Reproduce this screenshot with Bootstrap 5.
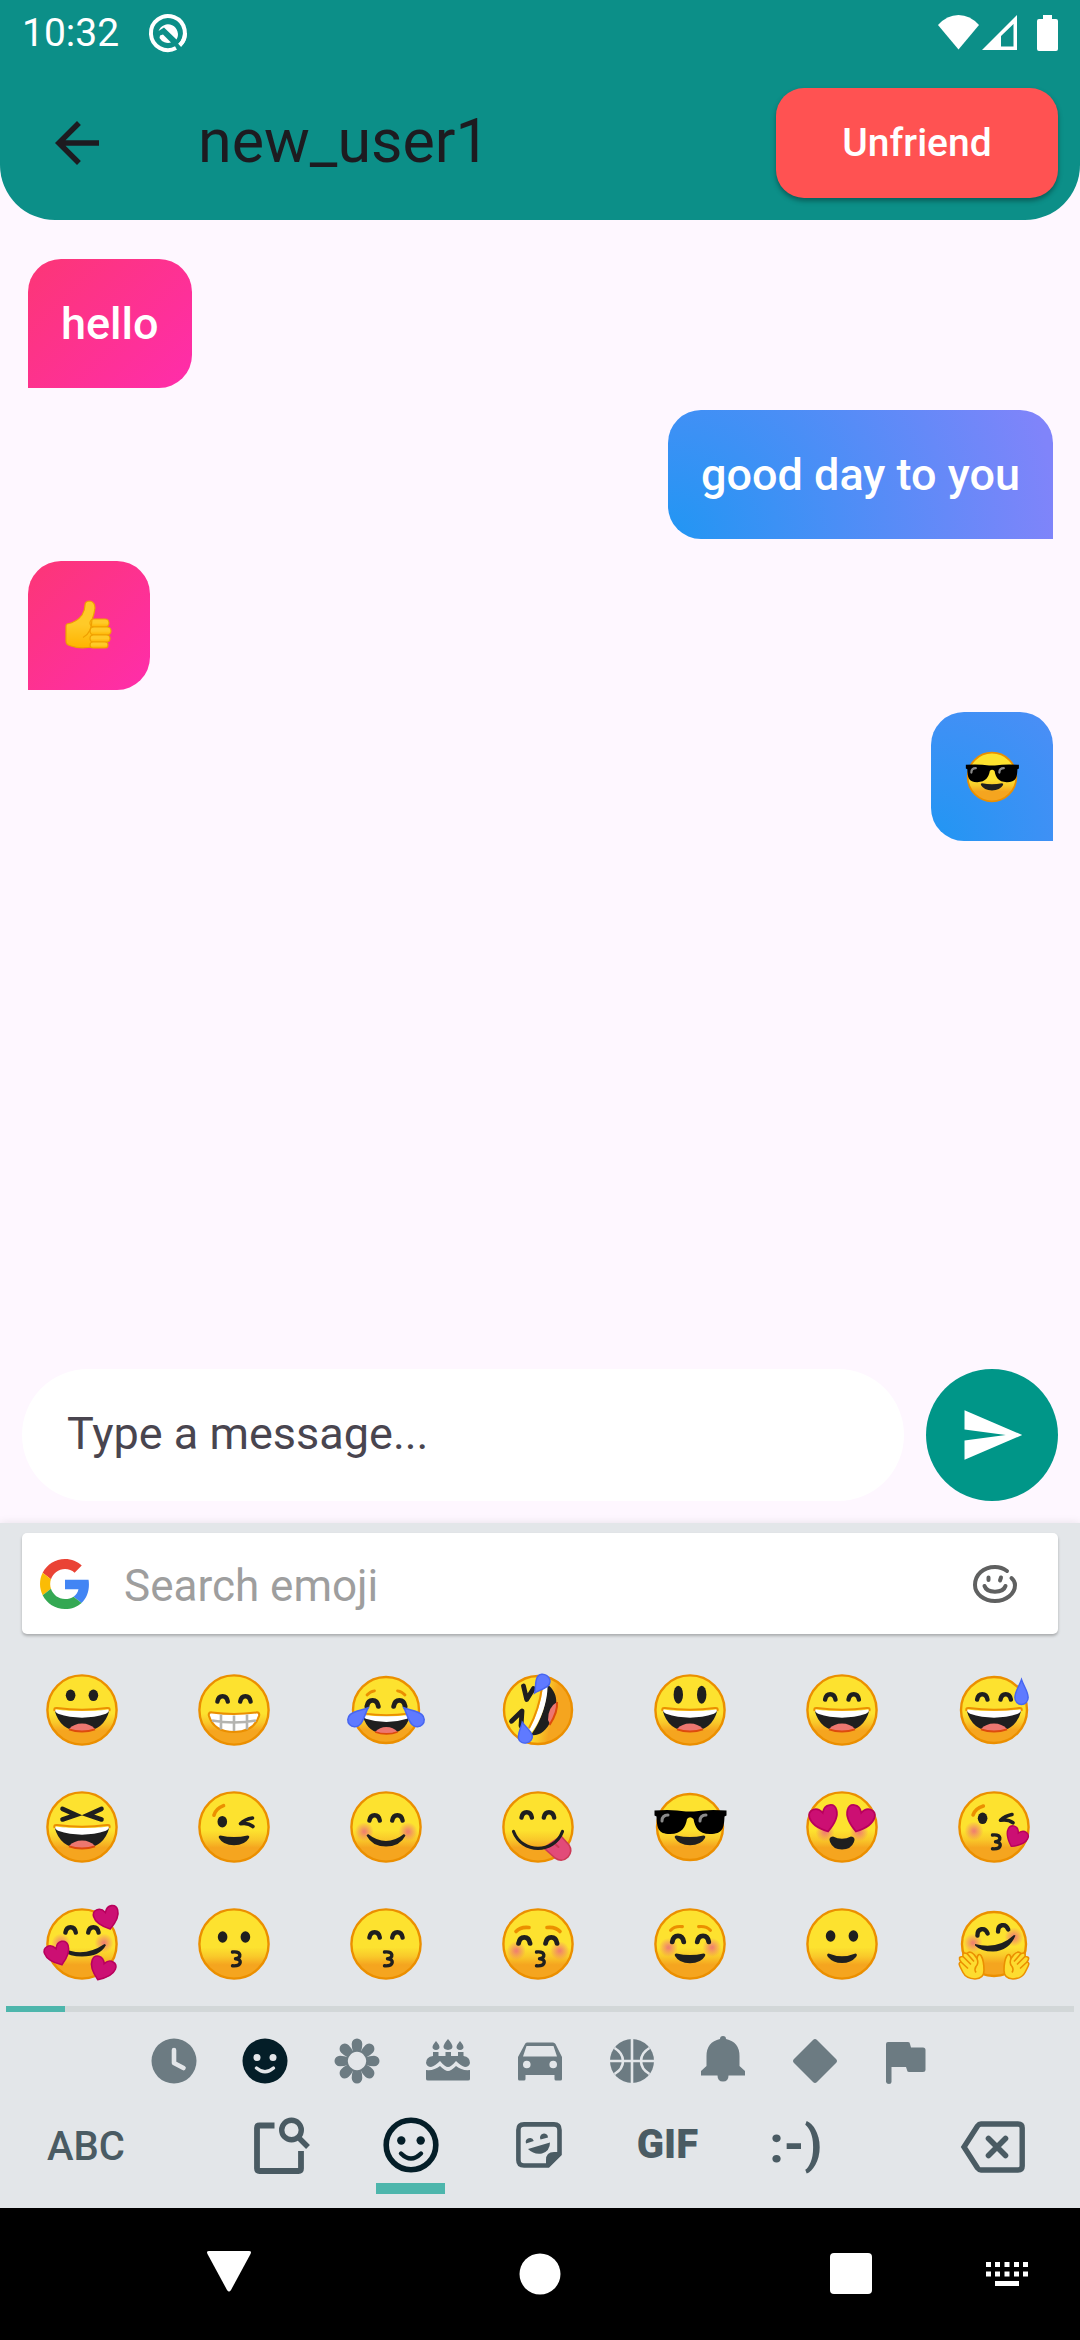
<!DOCTYPE html>
<html lang="en">
<head>
<meta charset="utf-8">
<meta name="viewport" content="width=device-width, initial-scale=1">
<title>Chat with new_user1</title>
<link href="https://cdn.jsdelivr.net/npm/bootstrap@5.3.0/dist/css/bootstrap.min.css" rel="stylesheet">
<style>
  body { font-family: Roboto, "Liberation Sans", sans-serif; background: #fef7ff; color: #1d1b20; }
  svg { display: block; flex: none; overflow: visible; }
  .btn { --bs-btn-border-width: 0; --bs-btn-padding-x: 0; --bs-btn-padding-y: 0; color: inherit; }

  .app-header { background: #0c8f88; border-radius: 0 0 55px 55px; }
  .status-bar { height: 66px; padding: 0 22px; font-size: 39px; line-height: 66px; }
  .clock-group { gap: 30px; }
  .title-bar { height: 154px; padding: 0 22px 0 44px; }
  .title-text { font-size: 61px; line-height: 80px; margin-left: 88px; padding-bottom: 4px; }
  .unfriend { width: 282px; height: 110px; border-radius: 28px; background: #ff5252; color: #fff;
    font-size: 39px; font-weight: 500; box-shadow: 0 3px 5px rgba(0,0,0,.35); }

  .thread { padding: 39px 27px 22px 28px; gap: 22px; }
  .bubble { height: 129px; padding: 0 33px; border-radius: 33px; color: #fff; font-size: 45px; font-weight: 500; }
  .bubble-in { background: linear-gradient(135deg, #fc3676, #ff2dab); border-bottom-left-radius: 0; }
  .bubble-out { background: radial-gradient(circle at bottom left, #2196f3, #8084fa 390px); border-bottom-right-radius: 0; }

  .composer { padding: 0 22px 22px; gap: 22px; }
  .composer-input { height: 132px; border: 0; border-radius: 66px; padding: 0 45px 4px; font-size: 45px; background: #fff; }
  .composer-input::placeholder { color: #49454f; opacity: 1; }
  .send { width: 132px; height: 132px; border-radius: 50%; background: #009688; color: #fff; }

  .keyboard { background: #e3e6e9; box-shadow: 0 -1px 8px rgba(0,0,0,.08); padding-top: 10px; }
  .emoji-search { height: 101px; margin: 0 22px; padding: 0 41px 0 18px; border-radius: 5px; background: #fff; box-shadow: 0 2px 3px rgba(0,0,0,.25); color: #5f6060; }
  .emoji-field { border: 0; padding: 4px 0 0 34px; font-size: 44px; background: transparent; }
  .emoji-field::placeholder { color: #9e9e9e; opacity: 1; }
  .emoji-grid { display: grid; grid-template-columns: repeat(7, 1fr); grid-auto-rows: 117px; margin: 17px 10px 4px 6px; }
  .page-track { height: 6px; margin: 0 6px; border-radius: 0; background: #d2d7d8; }
  .page-fill { background: #4db6ac; }
  .categories { height: 98px; padding: 0 128px; color: #6c7b82; }
  .categories .active, .mode.active { color: #041e28; }
  .modes { color: #4a5b63; padding: 0 55px 14px 47px; height: 98px; }
  .mode-side { height: 74px; }
  .mode-abc { width: 171px; font-size: 40px; font-weight: 500; }
  .mode-erase { width: 165px; }
  .mode { height: 84px; }
  .mode .glyph { height: 70px; }
  .mode-mark { width: 69px; height: 11px; margin-top: 3px; }
  .mode.active .mode-mark { background: #4db6ac; }
  .gif-label { font-weight: 900; font-size: 40px; }
  .text-face { font-size: 52px; font-weight: 700; }

  .system-nav { display: grid; grid-template-columns: 457fr 166fr 137fr 182fr 130fr 8fr; height: 132px; background: #000; color: #fff; }
</style>
<script src="https://cdn.jsdelivr.net/npm/bootstrap@5.3.0/dist/js/bootstrap.bundle.min.js"></script>
</head>
<body>

<!-- Shared emoji parts -->
<svg width="0" height="0" class="position-absolute" aria-hidden="true">
  <defs>
    <linearGradient id="skin" x1="0" y1="0" x2="0" y2="1">
      <stop offset=".55" stop-color="#fde22f"/><stop offset=".68" stop-color="#f9c92a"/><stop offset=".8" stop-color="#f5a51f"/>
    </linearGradient>
    <linearGradient id="skinside" x1="0" y1="0" x2="1" y2=".2">
      <stop offset=".5" stop-color="#fde22f"/><stop offset=".65" stop-color="#f9c92a"/><stop offset=".8" stop-color="#f5a51f"/>
    </linearGradient>
    <radialGradient id="rosy"><stop offset=".1" stop-color="#ef7a72" stop-opacity=".9"/><stop offset="1" stop-color="#ef7a72" stop-opacity="0"/></radialGradient>
    <linearGradient id="thumbskin" x1="0" y1="0" x2="0" y2="1"><stop offset=".5" stop-color="#ffca28"/><stop offset="1" stop-color="#ffb300"/></linearGradient>
    <circle id="disc" cx="40" cy="40" r="34.600" fill="url(#skin)" stroke="#eb8f00" stroke-width="2.400"/>
    <circle id="disc-s" cx="40" cy="40" r="33" fill="url(#skin)" stroke="#eb8f00" stroke-width="2.400"/>
    <ellipse id="dot" rx="4.800" ry="5.800" fill="#1f1f1f"/>
    <path id="arc" d="M-5.200 2.600C-4-4.600 4-4.600 5.200 2.600" fill="none" stroke="#1f1f1f" stroke-width="4.400" stroke-linecap="round"/>
    <circle id="cheek" r="9.500" fill="url(#rosy)"/>
    <g id="laugh">
      <path d="M12.500 40Q40 43 67.500 40Q62 61.500 40 61.500Q18 61.500 12.500 40Z" fill="#1f1f1f"/>
      <path d="M12.500 39.500Q40 42.500 67.500 39.500Q67 42.500 64 43.800Q40 51.500 16 43.800Q13 42.500 12.500 39.500Z" fill="#fff"/>
      <path d="M27 59Q32 53.500 40 53.500T53 59Q47 61.500 40 61.500T27 59Z" fill="#ed7770"/>
      <path d="M27 59.300Q33 61.500 40 61.500T53 59.300" fill="none" stroke="#dd4a0c" stroke-width="1.800"/>
      <path d="M12.500 41Q11.500 37.500 15 38Q40 41.500 65 38Q68.500 37.500 67.500 41" fill="none" stroke="#eb8f00" stroke-width="2"/>
    </g>
    <path id="smile" d="M22 47Q40 61 58 47L59.500 48.500Q54 59.500 40 59.500T20.500 48.500Z" fill="#1f1f1f"/>
    <path id="lips" d="M26.500 48.500Q40 51.500 53.500 48.500Q56 48.500 55 51Q51 58.200 40 58.200T25 51Q24 48.500 26.500 48.500Z" fill="#1f1f1f"/>
    <path id="kiss" d="M38.500 48C48 47 47.500 54.500 41.500 54.700C48.500 55 48 62.500 38.500 61.800" fill="none" stroke="#1f1f1f" stroke-width="3.400" stroke-linecap="round" stroke-linejoin="round"/>
    <path id="love" d="M0 12C-9 6-13 1-13-5C-13-12-4-14 0-6C4-14 13-12 13-5C13 1 9 6 0 12Z" fill="#cc0f73" stroke="#b8005c" stroke-width="1.600"/>
    <path id="tear" d="M0-13C2-7 7-1 7 5A7 7 0 0 1-7 5C-7-1-2-7 0-13Z" fill="#5f7aff" stroke="#4766f0" stroke-width="1.500"/>
    <path id="brow" d="M-6.500 2.500Q-2-2.500 6.500-1.500" fill="none" stroke="#eb8f00" stroke-width="3.600" stroke-linecap="round"/>
    <g id="hand" fill="#fddc30" stroke="#eb8f00" stroke-width="1.600" stroke-linejoin="round">
      <path d="M13 5Q13 13 4 13.500Q-5 13-8 7L-11 1Q-13-3-10-3.500Q-14-9-8-9Q-9-14-4-12Q-1-15 3-11L6-7Q7-13 10-10Q13-5 13 5Z"/>
      <path d="M-10-3.500L-3 3M-8-9L0-1M-4-12L3-4M6-7Q8-2 5 1Q3 4 5 7" fill="none"/>
    </g>
    <g id="cool">
      <use href="#disc-s"/>
      <path d="M4.500 23.500Q22 22 36 24.500H44Q58 22 76.500 23.500V28.500L74.500 29.500C74 41 73 47 60 47C48 47 45 40 43.500 32Q40 28.500 37 32C35.500 40 32 47 20 47C8 47 7 41 6.500 29.500L4.500 28.500Z" fill="#000"/>
      <path d="M12 34Q12 28 18 28M50 34Q50 28 56 28" fill="none" stroke="#8a8a8a" stroke-width="3" stroke-linecap="round"/>
      <use href="#lips"/>
    </g>
  </defs>
</svg>

<div class="min-vh-100 d-flex flex-column">

  <header class="app-header">
    <div class="status-bar d-flex align-items-center justify-content-between text-white">
      <div class="clock-group d-flex align-items-center">
        <span>10:32</span>
        <svg width="38" height="38" viewBox="-19 -19 38 38">
          <path d="M11.700 12.300A17 17 0 1 0 8 15" fill="none" stroke="#fff" stroke-width="4"/>
          <path d="M11.700 12.300A17 17 0 0 0 17 0" fill="none" stroke="#fff" stroke-width="4"/>
          <path d="M-9.500-2A10 10 0 1 1 8.500 6.500L-4-5.500ZM-8 2.500L-5 1.500 3 9.500A10 10 0 0 1-8.500 5Z" fill="#fff"/>
        </svg>
      </div>
      <div class="d-flex align-items-center">
        <svg width="120" height="36" viewBox="0 0 120 36" fill="#fff">
          <path d="M0 10Q9 0 20.500 0T41 10L20.500 34.500Z"/>
          <path fill-rule="evenodd" d="M44 35L79 0V35ZM63 31.500H75.500V9L63 21Z"/>
          <path d="M105 0H114V4H118Q120 4 120 6V34Q120 36 118 36H101Q99 36 99 34V6Q99 4 101 4H105Z"/>
        </svg>
      </div>
    </div>
    <div class="title-bar d-flex align-items-center">
      <button class="btn" type="button" aria-label="Back">
        <svg width="66" height="66" viewBox="0 0 24 24" fill="#1d1b20"><path d="M20 11H7.830l5.590-5.590L12 4l-8 8 8 8 1.410-1.410L7.830 13H20v-2z"/></svg>
      </button>
      <h1 class="title-text fw-normal mb-0 flex-grow-1">new_user1</h1>
      <button class="btn unfriend" type="button">Unfriend</button>
    </div>
  </header>

  <main class="thread flex-grow-1 d-flex flex-column">
    <div class="bubble bubble-in d-flex align-items-center align-self-start">hello</div>
    <div class="bubble bubble-out d-flex align-items-center align-self-end">good day to you</div>
    <div class="bubble bubble-in d-flex align-items-center align-self-start">
      <svg width="56" height="50" viewBox="0 0 56 50" role="img" aria-label="Thumbs up">
        <g fill="url(#thumbskin)" stroke="#f0a000" stroke-width="1.200">
          <path d="M6 23Q16 21 21 14Q24 9 24 4Q24 0 29 0Q34 1 34 7Q33 14 31 19L32 46Q18 48 10 45Q5 44 5 40V26Q5 23 6 23Z"/>
          <rect x="29" y="18" width="19" height="8" rx="4"/><rect x="29" y="26" width="21" height="8" rx="4"/><rect x="29" y="34" width="20" height="7" rx="3.500"/><rect x="29" y="41" width="18" height="6" rx="3"/>
        </g>
        <path d="M31 18Q31 32 22 36.500" fill="none" stroke="#f0a000" stroke-width="1.200"/>
      </svg>
    </div>
    <div class="bubble bubble-out d-flex align-items-center align-self-end">
      <svg width="56" height="56" viewBox="2 2 76 76" role="img" aria-label="Face with sunglasses"><use href="#cool"/></svg>
    </div>
  </main>

  <form class="composer d-flex align-items-center">
    <input class="form-control composer-input" type="text" placeholder="Type a message..." aria-label="Message">
    <button class="btn send d-flex align-items-center justify-content-center flex-shrink-0" type="button" aria-label="Send">
      <svg width="66" height="66" viewBox="0 0 24 24" fill="#fff"><path d="M2.010 21L23 12 2.010 3 2 10l15 2-15 2z"/></svg>
    </button>
  </form>

  <section class="keyboard" aria-label="Emoji keyboard">
    <div class="emoji-search d-flex align-items-center">
      <svg width="50" height="50" viewBox="0 0 48 48">
        <path fill="#EA4335" d="M24 9.500c3.540 0 6.710 1.220 9.210 3.600l6.850-6.850C35.900 2.380 30.470 0 24 0 14.620 0 6.510 5.380 2.560 13.220l7.980 6.190C12.430 13.720 17.740 9.500 24 9.500z"/>
        <path fill="#4285F4" d="M46.980 24.550c0-1.570-.15-3.090-.38-4.550H24v9.020h12.940c-.58 2.960-2.260 5.480-4.780 7.180l7.730 6c4.510-4.180 7.090-10.360 7.090-17.650z"/>
        <path fill="#FBBC05" d="M10.530 28.590c-.48-1.450-.76-2.990-.76-4.590s.27-3.140.76-4.590l-7.980-6.190C.92 16.460 0 20.120 0 24c0 3.880.92 7.540 2.560 10.780l7.970-6.190z"/>
        <path fill="#34A853" d="M24 48c6.480 0 11.930-2.130 15.890-5.810l-7.730-6c-2.150 1.450-4.920 2.300-8.160 2.300-6.260 0-11.570-4.220-13.470-9.910l-7.980 6.190C6.510 42.620 14.620 48 24 48z"/>
      </svg>
      <input class="form-control emoji-field" type="text" placeholder="Search emoji" aria-label="Search emoji">
      <svg width="44" height="38" viewBox="0 0 44 38" fill="none" stroke="currentColor" stroke-width="4" stroke-linecap="round">
        <path d="M34 6C30 3 26 2 22 2C10 2 2 10 2 20C2 29 11 36 22 36S42 29 42 20Q42 16 38.500 13"/>
        <path d="M15.500 12.500V15M28 12.500L27 15.500M11.500 21C14 28.500 30 28.500 32.500 21"/>
      </svg>
    </div>

    <div class="emoji-grid">
      <button class="btn d-flex align-items-center justify-content-center" type="button" aria-label="Grinning"><svg width="80" height="80"><use href="#disc"/><use href="#dot" x="28.600" y="25.300"/><use href="#dot" x="51.400" y="25.300"/><use href="#laugh"/></svg></button>
      <button class="btn d-flex align-items-center justify-content-center" type="button" aria-label="Beaming"><svg width="80" height="80"><use href="#disc"/><use href="#arc" x="28.600" y="29"/><use href="#arc" x="51.400" y="29"/><path d="M18 42.500Q40 45.500 62 42.500Q66 42 65 46Q60 62 40 62T15 46Q14 42 18 42.500Z" fill="#fff" stroke="#eb8f00" stroke-width="2.200"/><path d="M27 44.500V59.500M40 45.500V61M53 44.500V59.500M18 50.500Q40 54.500 62 50.500" fill="none" stroke="#b4b4b0" stroke-width="2.600"/></svg></button>
      <button class="btn d-flex align-items-center justify-content-center" type="button" aria-label="Tears of joy"><svg width="80" height="80"><use href="#disc-s"/><use href="#arc" transform="translate(26.600 33.500) scale(1.100)"/><use href="#arc" transform="translate(53.400 33.500) scale(1.100)"/><path d="M21 25Q24 21.500 28.500 20.800M59 25Q56 21.500 51.500 20.800" fill="none" stroke="#eb8f00" stroke-width="2.800" stroke-linecap="round"/><use href="#laugh" transform="translate(6 11) scale(.86)"/><use href="#tear" transform="translate(12.500 46.500) rotate(48)"/><use href="#tear" transform="translate(67.500 46.500) rotate(-48)"/></svg></button>
      <button class="btn d-flex align-items-center justify-content-center" type="button" aria-label="Rolling on the floor laughing"><svg width="80" height="80"><circle cx="40" cy="40" r="34" fill="url(#skinside)" stroke="#eb8f00" stroke-width="2.400"/><path d="M49 14C61 23 60 36 54 49C48 62 41 66 33 65C44 50 49 32 49 14Z" fill="#1f1f1f"/><path d="M45 16L49.500 15C50 32 42 52 34 62L31 60C39 46 43 32 45 16Z" fill="#fff"/><path d="M44 17C42 33 38 45 31 58" fill="none" stroke="#eb8f00" stroke-width="2"/><path d="M59 32Q50 37 50 50L52 54Q60 42 59 32Z" fill="#ed7770"/><path d="M59 32Q60 42 51.500 55" fill="none" stroke="#dd4a0c" stroke-width="2"/><path d="M25.500 16L28.700 29.500 35.500 18.500M13.500 51.300L24 41 23 56" fill="none" stroke="#1f1f1f" stroke-width="4.800" stroke-linecap="round" stroke-linejoin="round"/><use href="#tear" transform="translate(43 14) rotate(-145) scale(1 .85)"/><use href="#tear" transform="translate(26.500 63) rotate(-12) scale(1 .85)"/></svg></button>
      <button class="btn d-flex align-items-center justify-content-center" type="button" aria-label="Grinning with big eyes"><svg width="80" height="80"><use href="#disc"/><ellipse cx="28.300" cy="24.700" rx="4.700" ry="9" fill="#1f1f1f"/><ellipse cx="51.700" cy="24.700" rx="4.700" ry="9" fill="#1f1f1f"/><use href="#laugh"/></svg></button>
      <button class="btn d-flex align-items-center justify-content-center" type="button" aria-label="Grinning with smiling eyes"><svg width="80" height="80"><use href="#disc"/><use href="#arc" x="28.300" y="27"/><use href="#arc" x="51.700" y="27"/><use href="#laugh"/></svg></button>
      <button class="btn d-flex align-items-center justify-content-center" type="button" aria-label="Grinning with sweat"><svg width="80" height="80"><use href="#disc-s"/><use href="#arc" x="28.300" y="27"/><use href="#arc" x="51.700" y="27"/><use href="#laugh"/><use href="#tear" transform="translate(67.500 22.500) scale(.95 1)"/></svg></button>

      <button class="btn d-flex align-items-center justify-content-center" type="button" aria-label="Squinting"><svg width="80" height="80"><use href="#disc"/><path d="M20.500 21.800L34 28 20.500 32.500M59.500 21.800L46 28 59.500 32.500" fill="none" stroke="#1f1f1f" stroke-width="4.600" stroke-linecap="round"/><use href="#laugh"/></svg></button>
      <button class="btn d-flex align-items-center justify-content-center" type="button" aria-label="Winking"><svg width="80" height="80"><use href="#disc"/><use href="#dot" x="28.300" y="34.700"/><use href="#brow" transform="translate(24.500 23) rotate(-28)"/><path d="M58.500 31Q51 32 46.500 36.800Q54 35.500 59 39.500" fill="none" stroke="#1f1f1f" stroke-width="3.600" stroke-linecap="round" stroke-linejoin="round"/><use href="#lips"/></svg></button>
      <button class="btn d-flex align-items-center justify-content-center" type="button" aria-label="Blushing"><svg width="80" height="80"><use href="#disc"/><use href="#cheek" x="18.300" y="44.700"/><use href="#cheek" x="62" y="44.700"/><use href="#arc" x="28.600" y="31"/><use href="#arc" x="51.400" y="31"/><use href="#smile"/></svg></button>
      <button class="btn d-flex align-items-center justify-content-center" type="button" aria-label="Savoring food"><svg width="80" height="80"><use href="#disc"/><use href="#arc" x="28.700" y="28"/><use href="#arc" x="51" y="28"/><path d="M46 61L63 49L71 58Q75 64 70 70Q64 76 57 71Z" fill="#e24b79" stroke="#cc3a56" stroke-width="1.600"/><path d="M56 56L60.500 60" stroke="#cc3a56" stroke-width="2" stroke-linecap="round"/><path d="M15.500 44.500C24 67 56 67 64.500 44.500" fill="none" stroke="#1f1f1f" stroke-width="3.200" stroke-linecap="round"/></svg></button>
      <button class="btn d-flex align-items-center justify-content-center" type="button" aria-label="Sunglasses"><svg width="80" height="80"><use href="#cool"/></svg></button>
      <button class="btn d-flex align-items-center justify-content-center" type="button" aria-label="Heart eyes"><svg width="80" height="80"><use href="#disc"/><use href="#cheek" x="23" y="45"/><use href="#cheek" x="57" y="45"/><use href="#love" transform="translate(22.500 32) rotate(-16) scale(1.080)"/><use href="#love" transform="translate(57.500 32) rotate(16) scale(1.080)"/><path d="M31 49.500Q40 54 49 49.500Q54 50 52 55Q49 62.500 40 62.500T28 55Q26 50 31 49.500Z" fill="#1f1f1f"/></svg></button>
      <button class="btn d-flex align-items-center justify-content-center" type="button" aria-label="Blowing a kiss"><svg width="80" height="80"><use href="#disc"/><use href="#cheek" x="20" y="44"/><use href="#dot" x="28.600" y="31.300"/><use href="#brow" transform="translate(24 23) rotate(-24)"/><path d="M58 27.500Q51 29 46.500 33.300Q54 32 59 35.800" fill="none" stroke="#1f1f1f" stroke-width="3.600" stroke-linecap="round" stroke-linejoin="round"/><use href="#kiss"/><use href="#love" transform="translate(62 50.500) rotate(28) scale(.84)"/></svg></button>

      <button class="btn d-flex align-items-center justify-content-center" type="button" aria-label="Smiling with hearts"><svg width="80" height="80"><use href="#disc"/><use href="#cheek" x="19" y="39"/><use href="#cheek" x="62" y="39"/><use href="#arc" x="28.600" y="26"/><use href="#arc" x="51.400" y="26"/><path d="M20 44Q42 54 62.500 40L64 41Q58 52.500 40 52.500Q28 52.500 20 47Z" fill="#1f1f1f"/><use href="#love" transform="translate(65 14) rotate(-16)scale(.96)"/><use href="#love" transform="translate(16 50) rotate(-20)scale(.96)"/><use href="#love" transform="translate(60 65) rotate(22)scale(.96)"/></svg></button>
      <button class="btn d-flex align-items-center justify-content-center" type="button" aria-label="Kissing"><svg width="80" height="80"><use href="#disc"/><use href="#dot" x="28.600" y="33"/><use href="#dot" x="51.400" y="33"/><use href="#kiss"/></svg></button>
      <button class="btn d-flex align-items-center justify-content-center" type="button" aria-label="Kissing with smiling eyes"><svg width="80" height="80"><use href="#disc"/><use href="#arc" x="28.600" y="31"/><use href="#arc" x="51.400" y="31"/><use href="#kiss"/></svg></button>
      <button class="btn d-flex align-items-center justify-content-center" type="button" aria-label="Kissing with closed eyes"><svg width="80" height="80"><use href="#disc"/><use href="#cheek" x="18.300" y="46.700"/><use href="#cheek" x="61.700" y="46.700"/><use href="#brow" x="24.500" y="25"/><use href="#brow" transform="translate(55.500 25) scale(-1 1)"/><use href="#arc" transform="translate(26.300 36.500) scale(1.100)"/><use href="#arc" transform="translate(53.300 36.500) scale(1.100)"/><use href="#kiss"/></svg></button>
      <button class="btn d-flex align-items-center justify-content-center" type="button" aria-label="Smiling"><svg width="80" height="80"><use href="#disc"/><use href="#cheek" x="18.500" y="43.500"/><use href="#cheek" x="62" y="43.500"/><use href="#brow" transform="translate(26.500 24) scale(.9)"/><use href="#brow" transform="translate(54.500 24) scale(-.9 .9)"/><use href="#arc" transform="translate(28 35) scale(1.100)"/><use href="#arc" transform="translate(53 35) scale(1.100)"/><use href="#lips" y="1"/></svg></button>
      <button class="btn d-flex align-items-center justify-content-center" type="button" aria-label="Slightly smiling"><svg width="80" height="80"><use href="#disc"/><use href="#dot" x="28.600" y="32"/><use href="#dot" x="51.400" y="32"/><path d="M26.500 49.500Q40 55 53.500 49.500Q56 50 54 53Q49 59 40 59T26 53Q24 50 26.500 49.500Z" fill="#1f1f1f"/></svg></button>
      <button class="btn d-flex align-items-center justify-content-center" type="button" aria-label="Hugging"><svg width="80" height="80"><circle cx="40" cy="40" r="32" fill="url(#skin)" stroke="#eb8f00" stroke-width="2.400"/><use href="#cheek" x="19" y="39"/><use href="#cheek" x="60" y="33"/><use href="#arc" transform="translate(28 28) rotate(-12)"/><use href="#arc" transform="translate(48.600 24) rotate(-12)"/><path d="M21 40Q44 46 60 31L61.500 31.500Q55 47 39 47.500Q27 47.500 21 41.500Z" fill="#1f1f1f"/><use href="#hand" x="17" y="61.500"/><use href="#hand" transform="translate(63 61.500) scale(-1 1)"/></svg></button>
    </div>

    <div class="progress page-track"><div class="progress-bar page-fill" style="width: 5.5%"></div></div>

    <div class="categories d-flex align-items-center">
      <button class="btn col d-flex justify-content-center" type="button" aria-label="Recent"><svg width="46" height="46" viewBox="-23 -23 46 46"><circle r="22.500" fill="currentColor"/><path d="M0-11V2L9.500 7" fill="none" stroke="#e3e6e9" stroke-width="4.600" stroke-linecap="round" stroke-linejoin="round"/></svg></button>
      <button class="btn col d-flex justify-content-center active border-0" type="button" aria-label="Smileys"><svg width="46" height="46" viewBox="-23 -23 46 46"><circle r="22.500" fill="currentColor"/><circle cx="-8" cy="-3.500" r="3.500" fill="#e3e6e9"/><circle cx="8" cy="-3.500" r="3.500" fill="#e3e6e9"/><path d="M-8.500 7Q0 14.500 8.500 7" fill="none" stroke="#e3e6e9" stroke-width="3.400" stroke-linecap="round"/></svg></button>
      <button class="btn col d-flex justify-content-center" type="button" aria-label="Nature"><svg width="46" height="46" viewBox="-23 -23 46 46" fill="currentColor"><g id="petals"><path id="petal" d="M-3.800-8.500Q-5.300-13-5.300-17A5.300 5.500 0 0 1 5.300-17Q5.300-13 3.800-8.500Q0-10 -3.800-8.500Z"/><use href="#petal" transform="rotate(90)"/><use href="#petal" transform="rotate(180)"/><use href="#petal" transform="rotate(270)"/></g><use href="#petals" transform="rotate(45)"/></svg></button>
      <button class="btn col d-flex justify-content-center" type="button" aria-label="Food"><svg width="46" height="46" viewBox="-23 -23 46 46" fill="currentColor"><path d="M-12-20Q-5-12-12-11Q-19-12-12-20ZM0-22Q9-12 0-11Q-9-12 0-22ZM12-20Q19-12 12-11Q5-12 12-20Z"/><path d="M-15-9h5.500v4h7v-4h5.500v4h7v-4h5.500v4Q22-4 22 2Q21 6 17 6Q13 5 8 0Q3 6 0 6T-8 0Q-13 5-17 6Q-21 6-22 2Q-22-4-15-5Z"/><path d="M-22 9Q-14 10-8 5Q-3 10 0 10T8 5Q14 10 22 9V18Q22 19.500 20 19.500H-20Q-22 19.500-22 18Z"/></svg></button>
      <button class="btn col d-flex justify-content-center" type="button" aria-label="Travel"><svg width="46" height="46" viewBox="-23 -23 46 46" fill="currentColor"><path fill-rule="evenodd" d="M-15-17Q-14.500-18.500-13-18.500H13Q14.500-18.500 15.500-17L22-4V18Q22 19.500 20.500 19.500H16Q14.500 19.500 14.500 18V14H-14.500V18Q-14.500 19.500-16 19.500H-20.500Q-22 19.500-22 18V-4ZM-13.500-15L-17-4.500H17L13.500-15ZM-17 3.500a3.800 3.800 0 1 0 7.600 0a3.800 3.800 0 1 0-7.600 0M9.400 3.500a3.800 3.800 0 1 0 7.600 0a3.800 3.800 0 1 0-7.600 0"/></svg></button>
      <button class="btn col d-flex justify-content-center" type="button" aria-label="Activities"><svg width="46" height="46" viewBox="-23 -23 46 46"><circle r="22" fill="currentColor"/><path d="M0-23V23M-23 0H23M-17.500-13Q-9-8-9 0T-17.500 13M17.500-13Q9-8 9 0T17.500 13" fill="none" stroke="#e3e6e9" stroke-width="2.600"/></svg></button>
      <button class="btn col d-flex justify-content-center" type="button" aria-label="Objects"><svg width="46" height="46" viewBox="-23 -23 46 46" fill="currentColor"><path d="M-3-22Q-3-25 0-25T3-22Q16.500-19 16.500-5V5L22 10V14.500H5.500Q5.500 20.500 0 20.500T-5.500 14.500H-22V10L-16.500 5V-5Q-16.500-19-3-22Z"/></svg></button>
      <button class="btn col d-flex justify-content-center" type="button" aria-label="Symbols"><svg width="46" height="46" viewBox="-23 -23 46 46" fill="currentColor"><path d="M-2-21Q0-23 2-21L21-2Q23 0 21 2L2 21Q0 23-2 21L-21 2Q-23 0-21-2Z"/></svg></button>
      <button class="btn col d-flex justify-content-center" type="button" aria-label="Flags"><svg width="46" height="46" viewBox="-23 -23 46 46" fill="currentColor"><path d="M-20-17Q-20-19-18-19H2Q4-19 4-17L5-13.500H17Q19.500-13.500 19.500-11V9Q19.500 11 17 11H3Q1 11 1 9L0 6H-14.500V21Q-14.500 23-17 23T-20 21Z"/></svg></button>
    </div>

    <div class="modes d-flex">
      <button class="btn mode-side mode-abc text-start" type="button">ABC</button>
      <div class="d-flex flex-fill">
        <button class="btn mode col d-flex flex-column align-items-center" type="button" aria-label="Search stickers">
          <span class="glyph d-flex align-items-center"><svg width="56" height="57" viewBox="0 0 56 57" fill="none" stroke="currentColor"><path d="M20.500 8.500H5.500Q3 8.500 3 11V51.500Q3 54 5.500 54H44.500Q47 54 47 51.500V34" stroke-width="5.800"/><circle cx="37.500" cy="13" r="9.800" stroke-width="5.400"/><path d="M44 20L54 30" stroke-width="5.400"/></svg></span><span class="mode-mark"></span>
        </button>
        <button class="btn mode col active d-flex flex-column align-items-center border-0" type="button" aria-label="Emoji">
          <span class="glyph d-flex align-items-center"><svg width="56" height="56" viewBox="-28 -28 56 56"><circle r="24.800" fill="none" stroke="currentColor" stroke-width="5.600"/><circle cx="-9.700" cy="-4.500" r="4.200" fill="currentColor"/><circle cx="9.700" cy="-4.500" r="4.200" fill="currentColor"/><path d="M-10 8.500Q0 18.500 10 8.500" fill="none" stroke="currentColor" stroke-width="4.400" stroke-linecap="round"/></svg></span><span class="mode-mark"></span>
        </button>
        <button class="btn mode col d-flex flex-column align-items-center" type="button" aria-label="Stickers">
          <span class="glyph d-flex align-items-center"><svg width="46" height="46" viewBox="0 0 46 46" fill="currentColor"><path d="M8 2.400H38Q43.500 2.400 43.500 8V32L32 43.500H8Q2.400 43.500 2.400 38V8Q2.400 2.400 8 2.400Z" fill="none" stroke="currentColor" stroke-width="4.600"/><path d="M30 44V38Q30 30 38 30H44L45 33 33 45Z"/><path d="M12 27L34 20.500Q34 29 26 31.500Q18 33 12 27ZM10 21.500A4 4 0 1 1 17.800 19ZM24.500 17.500A4 4 0 1 1 32 15.500Z"/></svg></span><span class="mode-mark"></span>
        </button>
        <button class="btn mode col d-flex flex-column align-items-center" type="button">
          <span class="glyph d-flex align-items-center gif-label">GIF</span><span class="mode-mark"></span>
        </button>
        <button class="btn mode col d-flex flex-column align-items-center" type="button">
          <span class="glyph d-flex align-items-center text-face">:-)</span><span class="mode-mark"></span>
        </button>
      </div>
      <button class="btn mode-side mode-erase d-flex align-items-center justify-content-end" type="button" aria-label="Backspace">
        <svg width="64" height="52" viewBox="0 0 64 52" fill="none" stroke="currentColor"><path d="M20 3H57Q61.200 3 61.200 7V45Q61.200 49 57 49H20Q18 49 16.500 47L3 26L16.500 5Q18 3 20 3Z" stroke-width="5.400"/><path d="M27.500 17.500L44.500 34.500M44.500 17.500L27.500 34.500" stroke-width="5.600" stroke-linecap="round"/></svg>
      </button>
    </div>
  </section>

  <nav class="system-nav align-items-center justify-items-center" aria-label="System">
    <button class="btn d-flex justify-content-center" type="button" aria-label="Hide keyboard"><svg width="46" height="46" viewBox="0 0 46 46" fill="#fff"><path d="M3 0H43Q46 0 44.500 3L25 39Q23 42 21 39L1.500 3Q0 0 3 0Z"/></svg></button>
    <button class="btn d-flex justify-content-center" type="button" aria-label="Home"><svg width="42" height="42" viewBox="0 0 42 42" fill="#fff"><circle cx="21" cy="21" r="20.500"/></svg></button>
    <span></span>
    <button class="btn d-flex justify-content-center" type="button" aria-label="Overview"><svg width="42" height="42" viewBox="0 0 42 42" fill="#fff"><rect width="42" height="41" rx="4"/></svg></button>
    <button class="btn d-flex justify-content-center" type="button" aria-label="Switch keyboard"><svg width="42" height="24" viewBox="0 0 42 24" fill="#fff"><path d="M0 0h5v5H0zM9 0h5v5H9zM18.500 0h5v5h-5zM28 0h5v5h-5zM37 0h5v5h-5zM0 9.500h5v5H0zM9 9.500h5v5H9zM18.500 9.500h5v5h-5zM28 9.500h5v5h-5zM37 9.500h5v5h-5zM9 19h24v5H9z"/></svg></button>
  </nav>
</div>
</body>
</html>
